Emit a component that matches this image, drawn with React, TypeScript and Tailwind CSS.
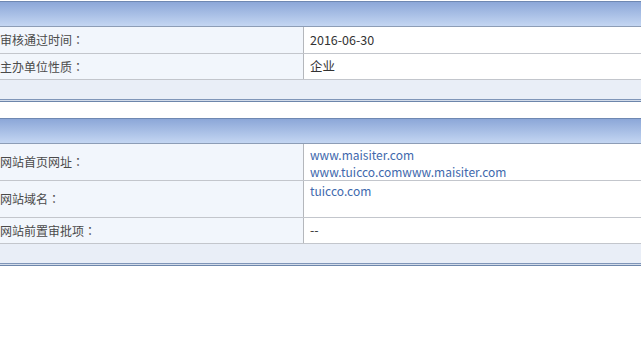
import React from "react";

type Row = {
  label: string;
  value: React.ReactNode;
  h: string;
  pad?: string;
};

const font = { fontFamily: '"Noto Sans CJK SC", "Noto Sans", sans-serif' };
const colonFont = { fontFamily: '"Noto Sans CJK TC", "Noto Sans CJK SC", sans-serif' };

function Label({ text }: { text: string }) {
  return (
    <span>
      {text}
      <span style={colonFont}>：</span>
    </span>
  );
}

function Section({ rows }: { rows: Row[] }) {
  return (
    <div className="w-full">
      <div className="h-px bg-[#6f88b2]" />
      <div className="h-[25px] bg-gradient-to-b from-[#8ca7d8] to-[#c4d6f2] border-b border-[#8d9db6]" />
      {rows.map((r, i) => (
        <div key={i} className={`flex ${r.h} border-b border-[#c3c6cc]`}>
          <div className="w-[304px] shrink-0 bg-[#f2f6fc] border-r border-[#b4b7bc] flex items-center text-[12px] text-[#4a4a4a]">
            <Label text={r.label} />
          </div>
          <div
            className={`flex-1 bg-white pl-[6px] text-[12.5px] text-[#333] flex flex-col ${
              r.pad ? `justify-start ${r.pad}` : "justify-center"
            }`}
          >
            {r.value}
          </div>
        </div>
      ))}
      <div className="h-[19px] bg-[#e9eef7]" />
      <div className="h-px bg-[#7f95b8]" />
      <div className="h-px bg-[#d3dcea]" />
      <div className="h-px bg-[#6d86ab]" />
    </div>
  );
}

export default function App() {
  const link = "text-[#4169ad] text-[12px] leading-[17px]";
  return (
    <div className="w-[641px] h-[363px] bg-white overflow-hidden" style={font}>
      <div className="h-px bg-white" />
      <Section
        rows={[
          { label: "审核通过时间", value: "2016-06-30", h: "h-[27px]" },
          { label: "主办单位性质", value: "企业", h: "h-[26px]" },
        ]}
      />
      <div className="h-[16px]" />
      <Section
        rows={[
          {
            label: "网站首页网址",
            value: (
              <>
                <span className={link}>www.maisiter.com</span>
                <span className={link}>www.tuicco.comwww.maisiter.com</span>
              </>
            ),
            h: "h-[37px]",
            pad: "pt-[2px]",
          },
          {
            label: "网站域名",
            value: <span className={link}>tuicco.com</span>,
            h: "h-[37px]",
            pad: "pt-[1px]",
          },
          { label: "网站前置审批项", value: "--", h: "h-[26px]" },
        ]}
      />
    </div>
  );
}
